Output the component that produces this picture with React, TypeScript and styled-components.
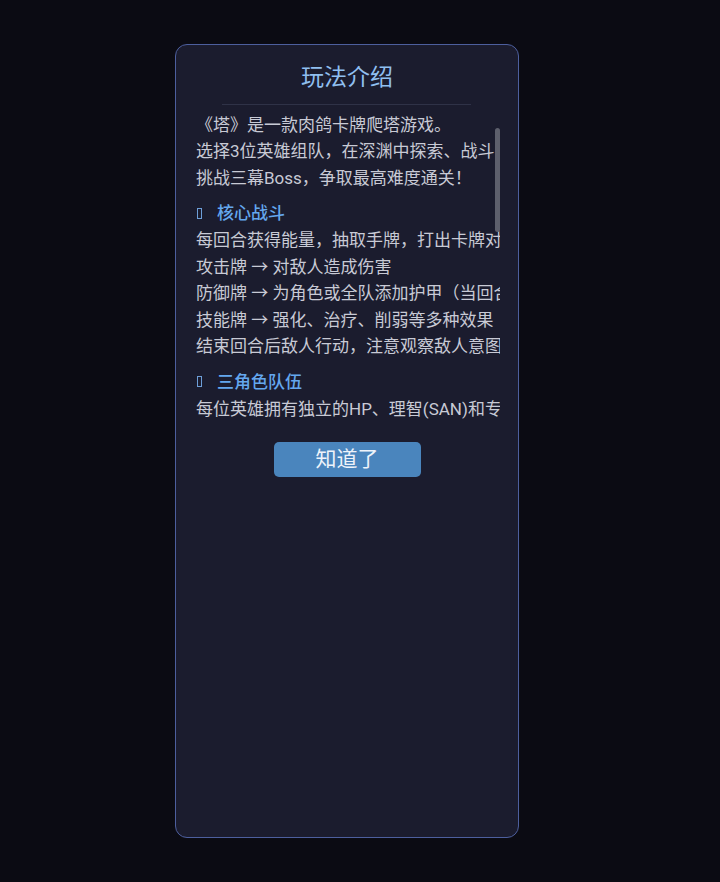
import React from 'react'
import styled, { createGlobalStyle } from 'styled-components'

const GlobalStyle = createGlobalStyle`
  html, body {
    margin: 0;
    padding: 0;
    background: #0b0b13;
  }
  body {
    font-family: Roboto, "Noto Sans CJK SC", sans-serif;
  }
`

const Page = styled.div`
  min-height: 882px;
  box-sizing: border-box;
  padding: 44px 0 0 175px;
`

const Card = styled.div`
  width: 344px;
  height: 794px;
  box-sizing: border-box;
  background: #1b1c2e;
  border: 1.5px solid #4d5f9e;
  border-radius: 12px;
  padding: 15.5px 18px 0 20px;
  display: flex;
  flex-direction: column;
`

const Title = styled.h2`
  margin: 0;
  text-align: center;
  font-size: 23px;
  font-weight: 400;
  line-height: 34px;
  color: #90bff0;
  padding-right: 2px;
`

const Divider = styled.div`
  height: 1px;
  background: #2f3247;
  margin: 9px 29px 7px 26px;
`

const ScrollBox = styled.div`
  position: relative;
`

const Scroll = styled.div`
  height: 311px;
  overflow: hidden;
  white-space: nowrap;
`

const Thumb = styled.div`
  position: absolute;
  top: 16px;
  right: 0;
  width: 5px;
  height: 104px;
  border-radius: 3px;
  background: #5d5f6c;
`

const Line = styled.div`
  font-size: 17px;
  line-height: 26.5px;
  color: #c8cad5;
`

const Heading = styled.div`
  display: flex;
  align-items: center;
  gap: 15px;
  margin: 9px 0 1px;
  font-size: 17px;
  font-weight: 500;
  line-height: 26px;
  color: #64a7ee;
`

const Tofu = styled.span`
  display: inline-block;
  width: 3px;
  height: 9px;
  border: 1px solid #6d9ed8;
  margin-left: 1px;
`

const Footer = styled.div`
  display: flex;
  justify-content: center;
  padding: 19px 2px 0 0;
`

const Button = styled.button`
  width: 147px;
  height: 35px;
  border: none;
  border-radius: 5px;
  background: #4a85bd;
  color: #eef3fa;
  font-family: inherit;
  font-size: 21px;
  line-height: 35px;
  padding: 0;
  cursor: pointer;
`

const sections = [
  {
    title: '核心战斗',
    lines: [
      '每回合获得能量，抽取手牌，打出卡牌对敌人造成效果',
      '攻击牌 → 对敌人造成伤害',
      '防御牌 → 为角色或全队添加护甲（当回合有效）',
      '技能牌 → 强化、治疗、削弱等多种效果',
      '结束回合后敌人行动，注意观察敌人意图',
    ],
  },
  {
    title: '三角色队伍',
    lines: [
      '每位英雄拥有独立的HP、理智(SAN)和专属卡组',
      '理智过低时会陷入疯狂状态，影响出牌',
      '英雄倒下后其卡牌将无法使用',
    ],
  },
]

export default function App() {
  return (
    <>
      <GlobalStyle />
      <Page>
        <Card>
          <Title>玩法介绍</Title>
          <Divider />
          <ScrollBox>
            <Scroll>
              <Line>《塔》是一款肉鸽卡牌爬塔游戏。</Line>
              <Line>选择3位英雄组队，在深渊中探索、战斗</Line>
              <Line>挑战三幕Boss，争取最高难度通关！</Line>
              {sections.map((s) => (
                <React.Fragment key={s.title}>
                  <Heading>
                    <Tofu />
                    {s.title}
                  </Heading>
                  {s.lines.map((l) => (
                    <Line key={l}>{l}</Line>
                  ))}
                </React.Fragment>
              ))}
            </Scroll>
            <Thumb />
          </ScrollBox>
          <Footer>
            <Button>知道了</Button>
          </Footer>
        </Card>
      </Page>
    </>
  )
}
